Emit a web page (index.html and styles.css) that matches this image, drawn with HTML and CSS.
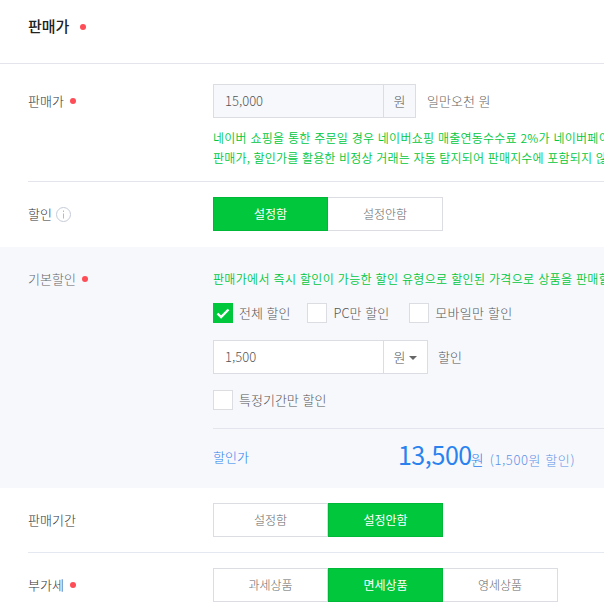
FILE: index.html
```html
<!DOCTYPE html>
<html lang="ko">
<head>
    <meta charset="UTF-8">
    <title>판매가</title>
    <link rel="stylesheet" href="styles.css">
</head>
<body>
    <div class="panel">
        <div class="panel-head">
            <h2>판매가</h2>
            <span class="dot dot-head"></span>
        </div>

        <div class="row row-price">
            <div class="label">판매가<span class="dot"></span></div>
            <div class="field">
                <div class="line">
                    <div class="input-group">
                        <span class="input input-price readonly">15,000</span>
                        <span class="unit readonly">원</span>
                    </div>
                    <span class="hangul-price">일만오천 원</span>
                </div>
                <p class="note note-price">네이버 쇼핑을 통한 주문일 경우 네이버쇼핑 매출연동수수료 2%가 네이버페이<br><span class="note-wide">판매가, 할인가를 활용한 비정상 거래는 자동 탐지되어 판매지수에 포함되지 않</span></p>
            </div>
        </div>

        <div class="row row-toggle">
            <div class="label">할인
                <svg class="info" width="15" height="15" viewBox="0 0 15 15">
                    <circle cx="7.5" cy="7.5" r="7" fill="none" stroke="#c5cad6"/>
                    <rect x="7" y="6.5" width="1" height="5" fill="#b4bac8"/>
                    <rect x="7" y="3.5" width="1" height="1.5" fill="#b4bac8"/>
                </svg>
            </div>
            <div class="field">
                <div class="btn-group">
                    <span class="btn on">설정함</span>
                    <span class="btn">설정안함</span>
                </div>
            </div>
        </div>

        <div class="discount">
            <div class="label">기본할인<span class="dot"></span></div>
            <div class="field">
                <p class="note note-discount">판매가에서 즉시 할인이 가능한 할인 유형으로 할인된 가격으로 상품을 판매할</p>
                <div class="checks">
                    <label class="check"><span class="box checked">
                        <svg width="20" height="20" viewBox="0 0 20 20"><path d="M4.5 10.5l3.6 3.6 7.4-7.6" fill="none" stroke="#fff" stroke-width="2.4"/></svg>
                    </span>전체 할인</label>
                    <label class="check"><span class="box"></span>PC만 할인</label>
                    <label class="check check-mobile"><span class="box"></span>모바일만 할인</label>
                </div>
                <div class="line line-amount">
                    <div class="input-group">
                        <span class="input input-price">1,500</span>
                        <span class="unit unit-select">원<i class="caret"></i></span>
                    </div>
                    <span class="suffix">할인</span>
                </div>
                <label class="check check-period"><span class="box"></span>특정기간만 할인</label>
                <div class="result">
                    <span class="result-label">할인가</span>
                    <span class="result-value"><strong>13,500</strong><em>원</em><small>(1,500원 할인)</small></span>
                </div>
            </div>
        </div>

        <div class="row row-period">
            <div class="label">판매기간</div>
            <div class="field">
                <div class="btn-group">
                    <span class="btn">설정함</span>
                    <span class="btn on">설정안함</span>
                </div>
            </div>
        </div>

        <div class="row row-tax">
            <div class="label">부가세<span class="dot"></span></div>
            <div class="field">
                <div class="btn-group">
                    <span class="btn">과세상품</span>
                    <span class="btn on">면세상품</span>
                    <span class="btn">영세상품</span>
                </div>
            </div>
        </div>
    </div>
</body>
</html>
```

FILE: styles.css
```css
html, body {
    margin: 0;
    height: 100%;
    overflow: hidden;
    background: #fff;
}
body {
    font-family: "Noto Sans CJK KR", "Noto Sans", sans-serif;
    font-size: 13px;
    font-weight: 300;
    color: #333;
    line-height: 20px;
}
.panel {
    width: 900px;
}
.panel-head {
    height: 63px;
    padding-left: 28px;
    border-bottom: 1px solid #e4e4ec;
    display: flex;
    align-items: center;
}
.panel-head h2 {
    margin: 0;
    font-size: 15px;
    font-weight: 500;
    color: #222;
    position: relative;
    top: -6px;
}
.dot {
    display: inline-block;
    width: 6px;
    height: 6px;
    margin-left: 6px;
    border-radius: 50%;
    background: #ff4d57;
    vertical-align: 2px;
}
.dot-head {
    margin-left: 11px;
    position: relative;
    top: -5px;
}
.row {
    display: flex;
    margin-left: 28px;
}
.label {
    width: 185px;
    flex: none;
    color: #333;
}
.row-price {
    padding-top: 20px;
    height: 97px;
    border-bottom: 1px solid #e4e4ec;
}
.row-price .label {
    padding-top: 7px;
}
.line {
    display: flex;
    align-items: center;
}
.input-group {
    display: flex;
    height: 34px;
}
.input, .unit {
    border: 1px solid #dcdde3;
    background: #fff;
    box-sizing: border-box;
    height: 34px;
    line-height: 32px;
    color: #555;
}
.input-price {
    width: 171px;
    padding-left: 11px;
}
.unit {
    width: 33px;
    margin-left: -1px;
    text-align: center;
}
.readonly {
    background: #f7f8fc;
}
.hangul-price {
    margin-left: 11px;
    color: #666;
}
.note {
    margin: 0;
    white-space: nowrap;
    font-size: 12px;
    font-weight: 350;
    color: #00c73c;
}
.note-price {
    margin-top: 10px;
    letter-spacing: .25px;
}
.note-wide {
    letter-spacing: .17px;
}
.note-discount {
    letter-spacing: .33px;
    padding-top: 1px;
}
.row-toggle {
    padding-top: 15px;
    height: 50px;
}
.row-toggle .label {
    padding-top: 7px;
}
.info {
    vertical-align: -3px;
}
.btn-group {
    display: flex;
}
.btn {
    width: 115px;
    height: 34px;
    box-sizing: border-box;
    border: 1px solid #dcdde3;
    border-left-width: 0;
    background: #fff;
    color: #666;
    font-size: 12px;
    line-height: 32px;
    text-align: center;
}
.btn:first-child {
    border-left-width: 1px;
}
.btn.on {
    background: #00c73c;
    border: 1px solid #00b837;
    color: #fff;
    font-weight: 400;
}
.discount {
    display: flex;
    height: 241px;
    box-sizing: border-box;
    padding: 21px 0 0 28px;
    background: #f7f8fc;
}
.discount .label {
    padding-top: 1px;
    color: #666;
}
.checks {
    display: flex;
    gap: 17px;
    margin-top: 14px;
}
.check {
    display: flex;
    align-items: center;
    height: 20px;
    color: #555;
}
.check-mobile {
    margin-left: 3px;
    letter-spacing: .3px;
}
.box {
    width: 20px;
    height: 20px;
    box-sizing: border-box;
    margin-right: 6px;
    border: 1px solid #dcdde3;
    background: #fff;
    flex: none;
}
.box.checked {
    border: 0;
    background: #00c73c;
}
.box svg {
    display: block;
}
.line-amount {
    margin-top: 17px;
}
.unit-select {
    width: 45px;
}
.caret {
    display: inline-block;
    margin-left: 4px;
    border: 4px solid transparent;
    border-top: 4px solid #666;
    border-bottom-width: 0;
    vertical-align: 2px;
}
.suffix {
    margin-left: 10px;
    color: #555;
}
.check-period {
    margin-top: 16px;
}
.result {
    display: flex;
    align-items: center;
    gap: 149px;
    width: 391px;
    height: 55px;
    margin-top: 18px;
    border-top: 1px solid #e4e4ec;
    color: #2a82ee;
}
.result-label {
    flex: none;
}
.result-value {
    flex: none;
    white-space: nowrap;
}
.result-value strong {
    font-size: 25px;
    font-weight: 400;
    letter-spacing: -.4px;
}
.result-value em {
    font-style: normal;
    font-size: 14px;
    margin-left: -1px;
}
.result-value small {
    margin-left: 6px;
    font-size: 13px;
    letter-spacing: .6px;
    color: #5c92e6;
}
.row-period {
    padding-top: 15px;
    height: 49px;
    border-bottom: 1px solid #e4e8f0;
}
.row-period .label, .row-tax .label {
    padding-top: 7px;
}
.row-tax {
    padding-top: 15px;
}
```
